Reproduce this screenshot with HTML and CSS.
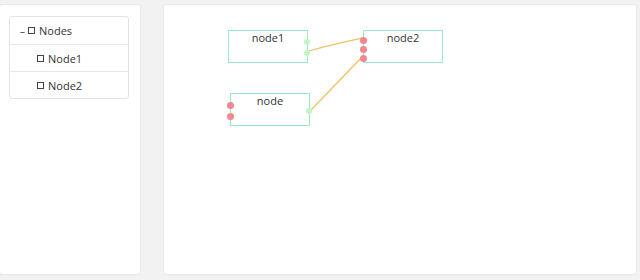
FILE: index.html
```html
<!DOCTYPE html>
<html>
<head>
<meta charset="utf-8">
<link rel="stylesheet" href="styles.css">
</head>
<body>
<div class="page">
  <aside class="card side">
    <ul class="tree">
      <li class="row root"><span class="toggle">–</span><span class="check"></span><span class="label">Nodes</span></li>
      <li class="row child"><span class="check"></span><span class="label">Node1</span></li>
      <li class="row child"><span class="check"></span><span class="label">Node2</span></li>
    </ul>
  </aside>
  <main class="card canvas">
    <svg class="edges" width="472" height="269" viewBox="0 0 472 269">
      <path d="M145 46 C165 40, 175 38, 199 33" fill="none" stroke="#f0c060" stroke-width="1.3"/>
      <path d="M147 105 L199 51" fill="none" stroke="#f0c060" stroke-width="1.3"/>
    </svg>
    <div class="node" style="left:64px;top:25px">node1
      <span class="port out" style="top:8px"></span>
      <span class="port out" style="top:19px"></span>
    </div>
    <div class="node" style="left:199px;top:25px">node2
      <span class="port in" style="top:6px"></span>
      <span class="port in" style="top:15px"></span>
      <span class="port in" style="top:24px"></span>
    </div>
    <div class="node" style="left:66px;top:88px">node
      <span class="port in" style="top:8px"></span>
      <span class="port in" style="top:19px"></span>
      <span class="port out" style="top:14px"></span>
    </div>
  </main>
</div>
</body>
</html>
```
FILE: styles.css
```css
html, body {
  margin: 0;
  padding: 0;
  background: #f2f2f2;
  font-family: "Open Sans", "Noto Sans", sans-serif;
  color: #333;
}
.page {
  display: flex;
  gap: 24px;
  padding: 5px 4px 6px 0;
  height: 280px;
  box-sizing: border-box;
}
.card {
  background: #fff;
  border-radius: 2px;
  box-shadow: 0 0 0 1px #e8e8e8, 0 1px 2px rgba(0,0,0,0.06);
}
.side {
  width: 140px;
  padding: 11px 11px 0 9px;
  box-sizing: border-box;
}
.tree {
  list-style: none;
  margin: 0;
  padding: 0;
  border: 1px solid #e4e4e4;
  border-radius: 3px;
}
.row {
  height: 26px;
  display: flex;
  align-items: center;
  font-size: 11px;
  border-top: 1px solid #e8e8e8;
}
.row:first-child { border-top: none; height: 27px; }
.root { padding-left: 10px; }
.child { padding-left: 27px; }
.toggle {
  font-size: 10px;
  margin-right: 3px;
  color: #444;
}
.check {
  width: 5px;
  height: 5px;
  border: 1px solid #444;
  margin-right: 4px;
}
.canvas {
  flex: 1;
  position: relative;
}
.edges {
  position: absolute;
  left: 0;
  top: 0;
}
.node {
  position: absolute;
  width: 78px;
  height: 31px;
  border: 1px solid #96eec4;
  background: #fff;
  font-size: 11px;
  text-align: center;
  line-height: 14px;
  padding-top: 0;
  box-sizing: content-box;
}
.port {
  position: absolute;
  width: 7px;
  height: 7px;
  border-radius: 50%;
}
.port.in {
  left: -4px;
  background: #f2878e;
}
.port.out {
  right: -3px;
  width: 6px;
  height: 6px;
  background: #c4f5c4;
}
```
